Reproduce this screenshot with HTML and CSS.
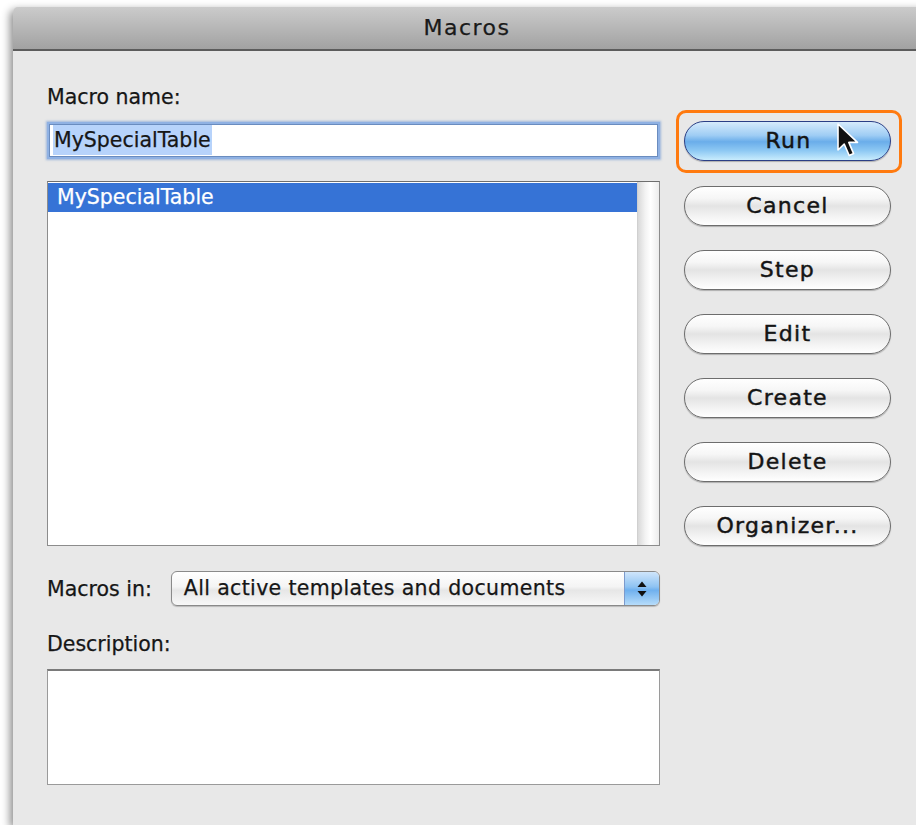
FILE: index.html
```html
<!DOCTYPE html>
<html>
<head>
<meta charset="utf-8">
<title>Macros</title>
<link rel="stylesheet" href="styles.css">
</head>
<body>
<div class="window">
  <div class="titlebar">Macros</div>
  <div class="content">
    <div class="left">
      <div class="label first">Macro name:</div>
      <div class="namefield"><span class="sel">MySpecialTable</span></div>
      <div class="list">
        <div class="rows">
          <div class="row active">MySpecialTable</div>
        </div>
        <div class="scrolltrack"></div>
      </div>
      <div class="inrow">
        <div class="label">Macros in:</div>
        <div class="popup">
          <span class="popup-text">All active templates and documents</span>
          <span class="popup-arrows">
            <svg width="12" height="20" viewBox="0 0 12 20"><path d="M6 2.5 L10.5 8 L1.5 8 Z" fill="#111"/><path d="M1.5 12 L10.5 12 L6 17.5 Z" fill="#111"/></svg>
          </span>
        </div>
      </div>
      <div class="label desc">Description:</div>
      <div class="descbox"></div>
    </div>
    <div class="right">
      <div class="focus">
        <div class="btn default">Run</div>
        <svg class="cursor" width="26" height="38" viewBox="0 0 26 38"><path d="M2 2 L2 28 L8.2 22 L13.2 33.5 L17.6 31.6 L12.8 20.4 L21.5 20.4 Z" fill="#111" stroke="#fff" stroke-width="1.6" stroke-linejoin="round"/></svg>
      </div>
      <div class="btn">Cancel</div>
      <div class="btn">Step</div>
      <div class="btn">Edit</div>
      <div class="btn">Create</div>
      <div class="btn">Delete</div>
      <div class="btn">Organizer...</div>
    </div>
  </div>
</div>
</body>
</html>
```
FILE: styles.css
```css
html, body {
  margin: 0;
  padding: 0;
  background: #ffffff;
}

body {
  font-family: "DejaVu Sans", "Liberation Sans", sans-serif;
  color: #161616;
  overflow: hidden;
  -webkit-text-stroke: 0.25px currentColor;
}

.window {
  margin: 7px 0 0 13px;
  width: 930px;
  height: 818px;
  background: #e8e8e8;
  box-shadow: -3px 3px 8px rgba(0,0,0,0.45);
  border-radius: 5px 0 0 0;
  display: flex;
  flex-direction: column;
}

.titlebar {
  height: 42px;
  border-radius: 5px 0 0 0;
  background: linear-gradient(#cbcbcb, #a2a2a2);
  border-bottom: 2px solid #5c5c5c;
  text-align: center;
  font-size: 22px;
  letter-spacing: 1.5px;
  line-height: 42px;
  padding-right: 22px;
  color: #1a1a1a;
}

.content {
  display: grid;
  grid-template-columns: 613px 207px;
  column-gap: 24px;
  padding: 0 0 0 34px;
}

.left {
  display: flex;
  flex-direction: column;
}

.label {
  font-size: 20.5px;
  line-height: 24px;
  white-space: nowrap;
}

.label.first {
  margin-top: 34px;
}

.namefield {
  margin: 15px 2px 0 2px;
  height: 31px;
  background: #fff;
  border: 1px solid #6a8cbf;
  box-shadow: 0 0 0 2px #8fb1e3, 0 0 2px 3px rgba(110,150,210,0.6);
  font-size: 20.5px;
  line-height: 31px;
  padding-left: 3px;
}

.sel {
  background: #b7d3fb;
  padding: 3px 1px;
}

.list {
  margin-top: 24px;
  height: 363px;
  border: 1px solid #8c8c8c;
  border-top-color: #6e6e6e;
  background: #fff;
  display: flex;
}

.rows {
  flex: 1;
}

.row {
  height: 29px;
  line-height: 29px;
  font-size: 20.5px;
  padding-left: 9px;
  margin-top: 1px;
}

.row.active {
  background: #3673d6;
  color: #fff;
}

.scrolltrack {
  width: 21px;
  border-left: 1px solid #d0d0d0;
  background: linear-gradient(90deg, #d9d9d9, #f3f3f3 35%, #ffffff 60%, #ececec);
}

.inrow {
  margin-top: 25px;
  display: flex;
  align-items: center;
  gap: 19px;
}

.popup {
  flex: 1;
  height: 33px;
  border: 1px solid #8a8a8a;
  border-radius: 6px;
  background: linear-gradient(#ffffff, #f4f4f4 45%, #e6e6e6 55%, #f8f8f8);
  display: flex;
  overflow: hidden;
  box-shadow: 0 1px 1px rgba(0,0,0,0.2);
}

.popup-text {
  flex: 1;
  font-size: 20.5px;
  letter-spacing: 0.35px;
  line-height: 33px;
  padding-left: 12px;
  white-space: nowrap;
}

.popup-arrows {
  width: 34px;
  border-left: 1px solid #7c9acc;
  background: linear-gradient(#cfe5fb, #8ec3f2 45%, #6fb0ee 55%, #b6dcfa);
  display: flex;
  align-items: center;
  justify-content: center;
}

.label.desc {
  margin-top: 26px;
}

.descbox {
  margin-top: 13px;
  height: 113px;
  background: #fff;
  border: 1px solid #9a9a9a;
  border-top: 2px solid #7a7a7a;
}

.right {
  display: flex;
  flex-direction: column;
  gap: 24px;
  padding-top: 70px;
}

.btn {
  height: 38px;
  border: 1px solid #6d6d6d;
  border-radius: 20px;
  background: linear-gradient(#ffffff, #f6f6f6 30%, #e4e4e4 50%, #f2f2f2 75%, #ffffff);
  box-shadow: 0 1px 1px rgba(0,0,0,0.25);
  text-align: center;
  font-size: 22px;
  letter-spacing: 1.3px;
  line-height: 38px;
  color: #141414;
  -webkit-text-stroke: 0.45px currentColor;
}

.btn.default {
  border-color: #2b3f86;
  background: linear-gradient(#d6ebfc, #9fcdf4 35%, #6aadea 52%, #8dc8f3 75%, #c8ecfd);
  padding-left: 2px;
}

.focus {
  position: relative;
  border: 3px solid #ff7a0f;
  border-radius: 10px;
  padding: 8px 8px 9px 5px;
  margin: -11px -11px -11px -8px;
}

.cursor {
  position: absolute;
  left: 157px;
  top: 9px;
}
```
